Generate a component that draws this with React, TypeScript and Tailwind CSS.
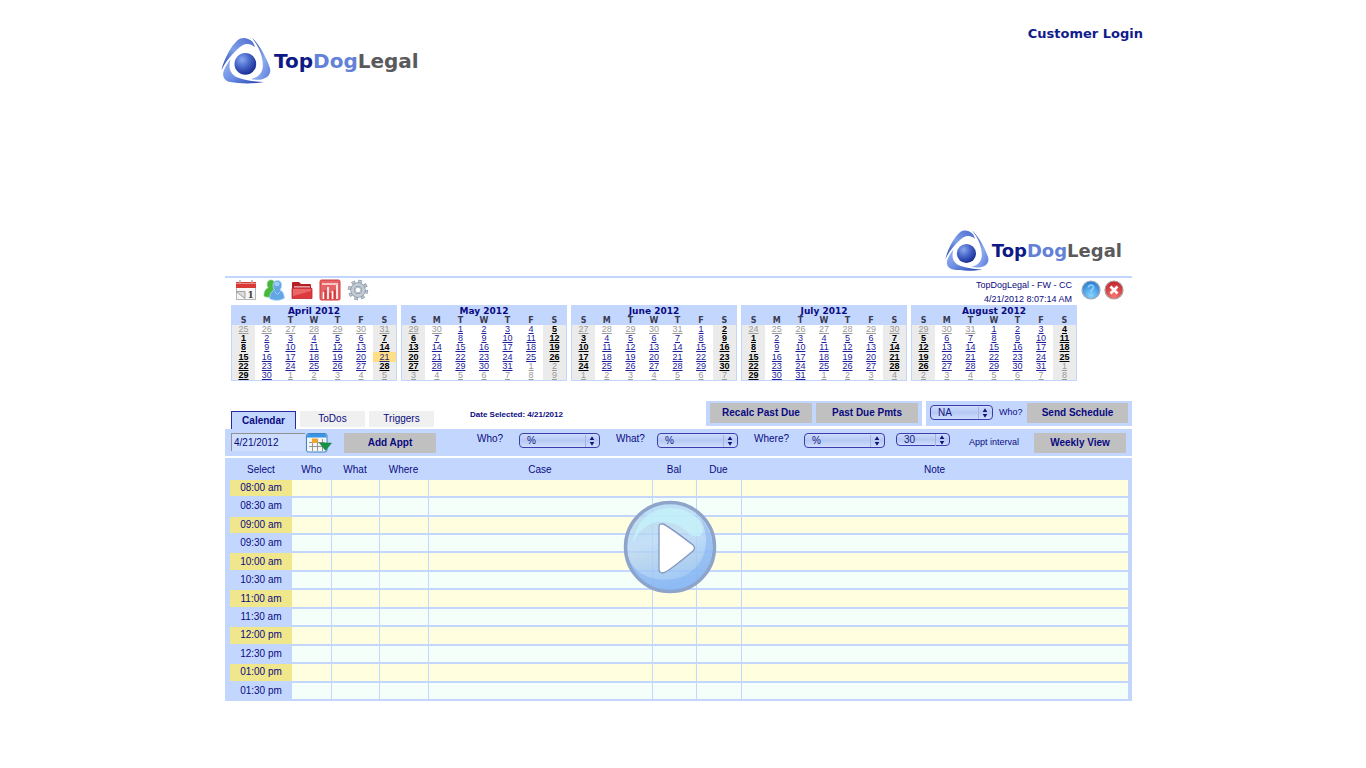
import React, { useState } from 'react';

interface Month {
  name: string;
  lead: number[];
  days: number;
}

const months: Month[] = [
  { name: 'April 2012', lead: [25, 26, 27, 28, 29, 30, 31], days: 30 },
  { name: 'May 2012', lead: [29, 30], days: 31 },
  { name: 'June 2012', lead: [27, 28, 29, 30, 31], days: 30 },
  { name: 'July 2012', lead: [24, 25, 26, 27, 28, 29, 30], days: 31 },
  { name: 'August 2012', lead: [29, 30, 31], days: 31 },
];

const weekdays = ['S', 'M', 'T', 'W', 'T', 'F', 'S'];

const times = [
  '08:00 am', '08:30 am', '09:00 am', '09:30 am', '10:00 am', '10:30 am',
  '11:00 am', '11:30 am', '12:00 pm', '12:30 pm', '01:00 pm', '01:30 pm',
];

const LogoMark: React.FC<{ id: string; className: string }> = ({ id, className }) => (
  <svg viewBox="33 36 152 143" className={className} aria-hidden="true">
    <defs>
      <radialGradient id={`${id}-ball`} cx="0.35" cy="0.3" r="0.8">
        <stop offset="0" stopColor="#8aa8f0" />
        <stop offset="0.45" stopColor="#4766c8" />
        <stop offset="1" stopColor="#0f2088" />
      </radialGradient>
      <linearGradient id={`${id}-left`} x1="1" y1="0" x2="0" y2="1">
        <stop offset="0" stopColor="#4a68cc" />
        <stop offset="0.5" stopColor="#7f9fe9" />
        <stop offset="1" stopColor="#2140b0" />
      </linearGradient>
      <linearGradient id={`${id}-right`} x1="0" y1="0" x2="1" y2="1">
        <stop offset="0" stopColor="#1f3fae" />
        <stop offset="0.6" stopColor="#8eaaf0" />
        <stop offset="1" stopColor="#5a7bd8" />
      </linearGradient>
      <linearGradient id={`${id}-base`} x1="0" y1="0" x2="1" y2="1">
        <stop offset="0" stopColor="#9db8f6" />
        <stop offset="0.5" stopColor="#6d8fe2" />
        <stop offset="1" stopColor="#1c3cab" />
      </linearGradient>
    </defs>
    <path d="M34 138 C42 104 62 64 84 45 C95 36 114 36 128 50 C133 56 135 62 136 67 C118 51 99 56 82 74 C62 94 46 112 34 138Z" fill={`url(#${id}-left)`} />
    <path d="M127 38 C148 58 170 94 182 131 C186 148 176 161 156 165 C146 167 134 166 124 164 C147 158 158 146 160 127 C162 98 149 66 127 38Z" fill={`url(#${id}-right)`} />
    <path d="M62 104 C53 135 64 153 88 161 C112 169 139 172 163 173 C130 179 89 178 61 173 C42 169 35 153 42 137 C47 125 54 114 62 104Z" fill={`url(#${id}-base)`} />
    <circle cx="107" cy="118" r="33" fill={`url(#${id}-ball)`} />
  </svg>
);

const LogoText: React.FC<{ className: string }> = ({ className }) => (
  <span className={`font-[DejaVu_Sans,sans-serif] leading-6 font-bold ${className}`}>
    <span className="text-[#0d1a85]">Top</span>
    <span className="text-[#6481d8]">Dog</span>
    <span className="text-[#5a5a5c]">Legal</span>
  </span>
);

const MonthCalendar: React.FC<{ month: Month }> = ({ month }) => {
  const cells = Array.from({ length: 42 }, (_, i) => {
    const n = i - month.lead.length;
    if (n < 0) return { day: month.lead[i], outside: true };
    if (n < month.days) return { day: n + 1, outside: false };
    return { day: n - month.days + 1, outside: true };
  });

  return (
    <table className="h-[76px] w-[166px] table-fixed border-collapse border border-[#c3d7fe] text-center">
      <thead className="bg-[#c3d7fe]">
        <tr className="h-[10px]">
          <th colSpan={7} className="p-0 font-[DejaVu_Sans,sans-serif] text-[9px] leading-[10px] font-bold">{month.name}</th>
        </tr>
        <tr className="h-[9px]">
          {weekdays.map((d, i) => (
            <th key={i} className="p-0 font-[DejaVu_Sans,sans-serif] text-[8px] leading-[9px] font-bold text-[#3a3a50]">{d}</th>
          ))}
        </tr>
      </thead>
      <tbody>
        {[0, 1, 2, 3, 4, 5].map((week) => (
          <tr key={week}>
            {cells.slice(week * 7, week * 7 + 7).map((cell, i) => {
              const weekend = i === 0 || i === 6;
              const selected = month.name === 'April 2012' && cell.day === 21;
              const bg = selected ? 'bg-[#fedf85]' : weekend ? 'bg-[#ebebeb]' : 'bg-white';
              const color = cell.outside
                ? 'text-[#999999]'
                : selected
                ? 'text-[#2a2a70]'
                : weekend
                ? 'font-bold text-black'
                : 'text-[#1c1c9c]';
              return (
                <td key={i} className={`p-0 text-[9px] leading-[9px] ${bg} ${color}`}>
                  <a href="#" className="underline">{cell.day}</a>
                </td>
              );
            })}
          </tr>
        ))}
      </tbody>
    </table>
  );
};

interface PickerProps {
  label: string;
  options: string[];
  className: string;
}

const Picker: React.FC<PickerProps> = ({ label, options, className }) => (
  <span className={`relative block shrink-0 ${className}`}>
    <select
      aria-label={label}
      className="block h-full w-full appearance-none rounded-[4px] border border-[#3c3cae] bg-linear-to-b from-[#cddcfb] via-[#b5c9f3] to-[#cfdefd] pl-[7px] text-[10px] leading-3 text-[#16167f] outline-none"
    >
      {options.map((o) => (
        <option key={o}>{o}</option>
      ))}
    </select>
    <svg viewBox="0 0 14 12" className="pointer-events-none absolute inset-y-0 right-px my-auto h-3 w-[14px]" aria-hidden="true">
      <path d="M0.5 0V12" stroke="#a2b4df" />
      <path d="M7 1.2L9.3 5H4.7ZM7 10.8L9.3 7H4.7Z" fill="#14147c" />
    </svg>
  </span>
);

const GrayButton: React.FC<{ className: string; children: React.ReactNode }> = ({ className, children }) => (
  <button type="button" className={`h-5 shrink-0 bg-[#c0c0c0] text-[10px] leading-5 font-bold ${className}`}>
    {children}
  </button>
);

const CalendarIcon = () => (
  <svg viewBox="0 0 22 20" className="h-5 w-[22px]">
    <rect x="1.5" y="2.5" width="19" height="17" fill="#f6f6f6" stroke="#b5b5b5" />
    <rect x="1" y="2" width="20" height="6" fill="#d83a35" />
    <path d="M1 3.5h20" stroke="#f08a80" />
    <path d="M5 0v4M17 0v4" stroke="#b9a3a3" strokeWidth="1.5" />
    <path d="M1 11.5h9v7z" fill="#dcdcdc" stroke="#999" strokeWidth=".9" />
    <text x="12.5" y="17.5" fontSize="9" fontWeight="bold" fill="#444" fontFamily="DejaVu Serif, serif">1</text>
  </svg>
);

const PeopleIcon = () => (
  <svg viewBox="0 0 22 22" className="h-[22px] w-[22px]">
    <path d="M1 17C1 12 3 9.5 5.5 9C3.500 7 3.500 1 8 1S12.500 7 10.500 9L13 13L9 18C5 18.500 2 18 1 17Z" fill="#46b83c" stroke="#7cca70" strokeWidth=".6" />
    <path d="M6.500 19.500C7 14 9 11.500 11.500 11C9 8 9.500 1.500 14.500 1.500S19.500 8 17 11C20 12 21 15 21.500 19C18 22 10 22 6.500 19.500Z" fill="#62a6e6" stroke="#b4d8f8" strokeWidth=".8" />
    <path d="M11.500 12.500l3 3 3-3" fill="none" stroke="#a6d0f7" strokeWidth=".9" />
    <ellipse cx="14" cy="5" rx="2.600" ry="2.300" fill="#9fcdf7" />
  </svg>
);

const FolderIcon = () => (
  <svg viewBox="0 0 22 20" className="h-5 w-[22px]">
    <path d="M1 18V3q0-1 1-1h6l2 2h9q1 0 1 1v13z" fill="#b51f26" />
    <path d="M3 7h16" stroke="#f3c5c5" strokeWidth="1.5" />
    <path d="M1 18.500V9q0-1 1-1h18q1 0 1 1v9.500z" fill="#dc3a3e" stroke="#b8252b" strokeWidth=".8" />
    <path d="M2 16L20 11V9H2z" fill="#ee7b7c" opacity=".7" />
  </svg>
);

const ChartIcon = () => (
  <svg viewBox="0 0 22 22" className="h-[22px] w-[22px]">
    <rect x="1" y="1" width="20" height="20" rx="1.5" fill="#e56465" stroke="#d43a3d" />
    <path d="M3 5h16" stroke="#ffe4e4" strokeWidth="1.500" />
    <path d="M4.500 20v-7M9 20V8M13.500 20v-8M18 20V6" stroke="#fff" strokeWidth="1.600" />
    <path d="M6.500 20v-9M11.300 20v-6M15.800 20v-9" stroke="#d8373a" strokeWidth="1.800" />
  </svg>
);

const GearIcon = () => (
  <svg viewBox="0 0 22 22" className="h-[22px] w-[22px]">
    <circle cx="11" cy="11" r="8.700" fill="none" stroke="#8a97a6" strokeWidth="3" strokeDasharray="3.600 3.233" />
    <circle cx="11" cy="11" r="8.500" fill="none" stroke="#c3cbd5" strokeWidth="2" strokeDasharray="2.200 4.476" strokeDashoffset="-.7" />
    <circle cx="11" cy="11" r="5.500" fill="none" stroke="#8794a3" strokeWidth="4.400" />
    <circle cx="11" cy="11" r="5.500" fill="none" stroke="#c3cbd5" strokeWidth="3" />
    <circle cx="11" cy="11" r="2.800" fill="#fff" stroke="#8895a4" strokeWidth=".7" />
  </svg>
);

const HelpIcon = () => (
  <svg viewBox="0 0 20 20" className="h-5 w-5">
    <defs>
      <radialGradient id="help" cx=".5" cy=".8" r=".8">
        <stop offset="0" stopColor="#86d5ff" />
        <stop offset="1" stopColor="#2377d0" />
      </radialGradient>
    </defs>
    <circle cx="10" cy="10" r="9" fill="url(#help)" stroke="#a2a9b4" strokeWidth="1.200" />
    <path d="M7.500 7.500C7.500 4 13 4.500 12.500 7.500C12.200 9.500 10 9.500 10 12M10 14v1.500" fill="none" stroke="#8dcfff" strokeWidth="1.600" />
  </svg>
);

const CloseIcon = () => (
  <svg viewBox="0 0 20 20" className="h-5 w-5">
    <defs>
      <radialGradient id="close" cx=".5" cy=".85" r=".8">
        <stop offset="0" stopColor="#fa7770" />
        <stop offset="1" stopColor="#c4262b" />
      </radialGradient>
    </defs>
    <circle cx="10" cy="10" r="9" fill="url(#close)" stroke="#aaa1a1" strokeWidth="1.200" />
    <path d="M6.500 6.500l7 7M13.500 6.500l-7 7" stroke="#fff" strokeWidth="2.600" />
  </svg>
);

const DatePickerIcon = () => (
  <svg viewBox="0 0 26 20" className="h-5 w-[26px]">
    <rect x=".5" y=".5" width="20.500" height="18.500" rx="2" fill="#f5f5f5" stroke="#3f83c9" />
    <path d="M1 3q0-2 2-2h15.500q2 0 2 2v1.500H1z" fill="#3b93e4" />
    <path d="M3 9.500h16M3 13.500h16M6.500 6v12M11.500 6v12M16.500 6v12" stroke="#8c8c8c" strokeWidth=".9" />
    <rect x="6" y="5.500" width="5.500" height="4.500" fill="#f5a623" />
    <path d="M13.500 10h12l-6 7.500z" fill="#159447" stroke="#0d7c3b" strokeWidth=".5" />
  </svg>
);

const PlayIcon = () => (
  <svg viewBox="0 0 94 94" className="h-[94px] w-[94px]">
    <defs>
      <linearGradient id="disc" x1="0" y1="0" x2=".3" y2="1">
        <stop offset="0" stopColor="#a9d7f4" stopOpacity=".8" />
        <stop offset=".5" stopColor="#b8d6f5" stopOpacity=".8" />
        <stop offset="1" stopColor="#8fbdf3" stopOpacity=".85" />
      </linearGradient>
    </defs>
    <circle cx="47" cy="47" r="44.500" fill="url(#disc)" stroke="#8ea4ca" strokeWidth="3.500" />
    <path d="M5 57C13 77 34 82 51 79C70 76 84 60 83 38C82 26 78 19 74 15C88 27 93 45 87 62C78 85 55 94 36 89C20 85 8 72 5 57Z" fill="#80aff3" opacity=".5" />
    <path d="M10 44C12 22 27 8 47 8C65 8 79 18 80 31C79 38 70 38 64 32C51 20 32 18 20 29C14 34 12 39 10 44Z" fill="#c4f3fb" opacity=".75" />
    <path d="M36 27Q36 23 40 24Q44 25 70 45Q73 48 70 51Q45 72 40 73Q36 73 36 69Z" fill="#fff" stroke="#8297c2" strokeWidth="1.300" />
  </svg>
);

const toolIcons = [
  { name: 'Calendar', icon: <CalendarIcon /> },
  { name: 'Contacts', icon: <PeopleIcon /> },
  { name: 'Files', icon: <FolderIcon /> },
  { name: 'Reports', icon: <ChartIcon /> },
  { name: 'Settings', icon: <GearIcon /> },
];

const Schedule = () => (
  <div className="mt-[2px] bg-[#c3d7fe] pr-1 pl-[5px]">
    <table className="h-[243px] w-full table-fixed border-collapse text-center text-[10px] leading-3">
      <colgroup>
        <col className="w-[62px]" />
        <col className="w-[39px]" />
        <col className="w-12" />
        <col className="w-[49px]" />
        <col className="w-56" />
        <col className="w-11" />
        <col className="w-[45px]" />
        <col />
      </colgroup>
      <thead>
        <tr className="h-[22px]">
          {['Select', 'Who', 'What', 'Where', 'Case', 'Bal', 'Due', 'Note'].map((h) => (
            <th key={h} className="p-0 pt-px font-normal">{h}</th>
          ))}
        </tr>
      </thead>
      <tbody>
        {times.map((time, row) => (
          <tr key={time} className="border-b-2 border-[#c3d7fe]">
            <th scope="row" className={`p-0 font-normal ${row % 2 === 0 ? 'bg-[#f0e68c]' : ''}`}>{time}</th>
            {[0, 1, 2, 3, 4, 5, 6].map((c) => (
              <td
                key={c}
                className={`border-r border-[#c3d7fe] p-0 last:border-r-0 ${row % 2 === 0 ? 'bg-[#ffffe0]' : 'bg-[#f5fffa]'}`}
              />
            ))}
          </tr>
        ))}
      </tbody>
    </table>
  </div>
);

const App = () => {
  const [date, setDate] = useState('4/21/2012');
  const [tab, setTab] = useState('Calendar');

  return (
    <div className="bg-white font-['Liberation_Sans',Arial,sans-serif] text-[#0a0a80]">
      <div className="mx-auto w-full max-w-[924px]">
        <header className="flex items-start justify-between pt-[26px] pr-[2px]">
          <a href="#" className="mt-[11px] flex items-center gap-[3px]">
            <LogoMark id="top" className="h-[47px] w-[50px]" />
            <LogoText className="text-[20px]" />
          </a>
          <a href="#" className="font-[DejaVu_Sans,sans-serif] text-[13px] leading-4 font-bold text-[#0f1c8c]">Customer Login</a>
        </header>

        <main className="relative mt-[145px] mr-[13px] ml-1">
          <div className="flex items-center justify-end gap-[3px] border-b-2 border-[#c3d7fe] pr-[10px] pb-1">
            <LogoMark id="panel" className="h-[43px] w-[44px]" />
            <LogoText className="text-[18px]" />
          </div>

          <div className="flex h-[27px] justify-between pl-[10px] pr-[8px]">
            <nav className="flex h-6 items-center gap-[6px]">
              {toolIcons.map((t) => (
                <button key={t.name} type="button" aria-label={t.name}>{t.icon}</button>
              ))}
            </nav>
            <div className="flex gap-[9px]">
              <p className="text-right text-[9px] leading-[14px]">
                TopDogLegal - FW - CC
                <br />
                4/21/2012 8:07:14 AM
              </p>
              <div className="flex h-6 items-center gap-[3px]">
                <button type="button" aria-label="Help"><HelpIcon /></button>
                <button type="button" aria-label="Close"><CloseIcon /></button>
              </div>
            </div>
          </div>

          <div className="flex gap-1 pl-[6px]">
            {months.map((m) => (
              <MonthCalendar key={m.name} month={m} />
            ))}
          </div>

          <div className="mt-5 flex h-7 items-start">
            <div className="mt-[10px] ml-[6px] flex h-[18px] items-start gap-1 text-[10px] leading-4">
              {['Calendar', 'ToDos', 'Triggers'].map((name) => (
                <button
                  key={name}
                  type="button"
                  onClick={() => setTab(name)}
                  className={
                    tab === name
                      ? 'h-[18px] w-[65px] border border-b-0 border-[#2a2aa0] bg-[#c3d7fe] font-bold'
                      : 'h-4 w-[65px] bg-[#f0f0f0]'
                  }
                >
                  {name}
                </button>
              ))}
            </div>
            <p className="mt-2 ml-9 text-[8px] leading-3 font-bold">Date Selected: 4/21/2012</p>
            <div className="ml-auto flex h-[25px] items-start gap-1 bg-[#c3d7fe] px-1 pt-[2px]">
              <GrayButton className="w-[102px]">Recalc Past Due</GrayButton>
              <GrayButton className="w-[102px]">Past Due Pmts</GrayButton>
            </div>
            <div className="ml-1 flex h-[25px] items-start bg-[#c3d7fe] px-1 pt-[2px]">
              <Picker label="Who" options={['NA']} className="mt-[2px] h-[15px] w-[63px]" />
              <span className="mt-[3px] ml-[6px] w-7 text-[9px] leading-3">Who?</span>
              <GrayButton className="w-[101px]">Send Schedule</GrayButton>
            </div>
          </div>

          <div className="flex h-[27px] items-start bg-[#c3d7fe] pt-1 pr-[6px] pl-[6px] text-[10px] leading-3">
            <input
              aria-label="Date"
              value={date}
              onChange={(e) => setDate(e.target.value)}
              className="h-[18px] w-[74px] border-t border-l border-[#909090] bg-[#cddefe] px-[2px] outline-none"
            />
            <button type="button" aria-label="Pick a date" className="ml-px"><DatePickerIcon /></button>
            <GrayButton className="ml-3 w-[92px]">Add Appt</GrayButton>
            <span className="ml-[41px] w-[42px]">Who?</span>
            <Picker label="Who" options={['%']} className="h-[15px] w-[81px]" />
            <span className="ml-4 w-[41px]">What?</span>
            <Picker label="What" options={['%']} className="h-[15px] w-[81px]" />
            <span className="ml-4 w-[50px]">Where?</span>
            <Picker label="Where" options={['%']} className="h-[15px] w-[81px]" />
            <Picker label="Appointment interval" options={['30']} className="ml-[11px] h-[13px] w-[54px]" />
            <span className="mt-[3px] ml-[19px] text-[9px]">Appt interval</span>
            <GrayButton className="ml-auto w-[92px]">Weekly View</GrayButton>
          </div>

          <Schedule />

          <button type="button" aria-label="Play video" className="absolute bottom-[107px] left-[398px]">
            <PlayIcon />
          </button>
        </main>
      </div>
    </div>
  );
};

export default App;
